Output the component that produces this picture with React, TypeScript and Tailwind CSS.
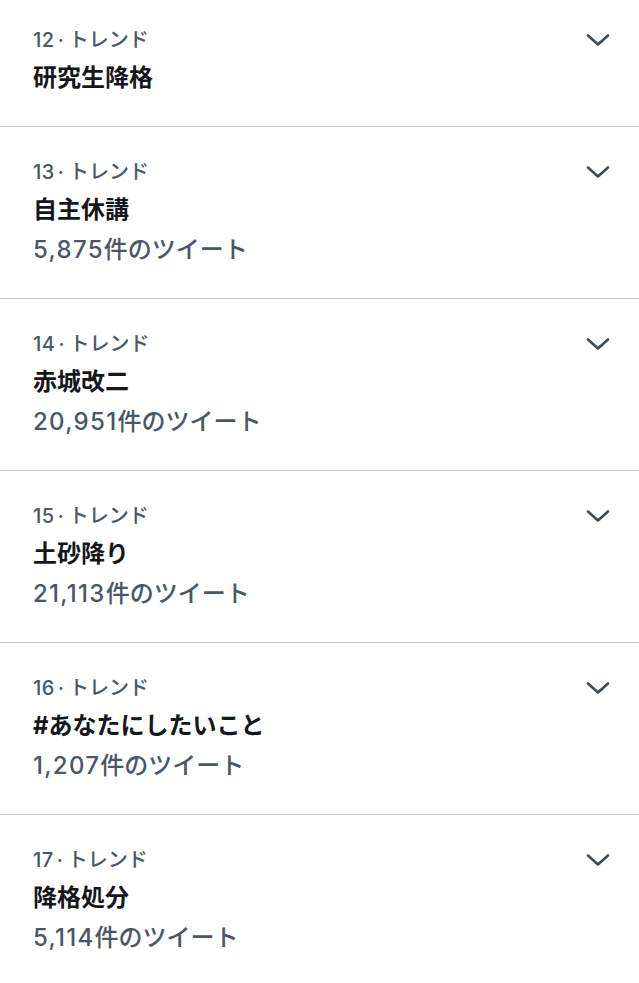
interface Trend {
  rank: number;
  title: string;
  count?: string;
}

const trends: Trend[] = [
  { rank: 12, title: '研究生降格' },
  { rank: 13, title: '自主休講', count: '5,875' },
  { rank: 14, title: '赤城改二', count: '20,951' },
  { rank: 15, title: '土砂降り', count: '21,113' },
  { rank: 16, title: '#あなたにしたいこと', count: '1,207' },
  { rank: 17, title: '降格処分', count: '5,114' },
];

const Chevron = () => (
  <svg aria-hidden="true" width="24" height="16" viewBox="0 0 24 16" fill="none" className="text-[#3d4a58]">
    <path d="M2 3.5 12 12.5 22 3.5" stroke="currentColor" strokeWidth="2.6" strokeLinecap="round" strokeLinejoin="round" />
  </svg>
);

const TrendRow = ({ trend, first }: { trend: Trend; first: boolean }) => (
  <div
    className={`flex items-start justify-between border-b border-[#c8c8c8] pl-[33px] pr-[29px] pb-[28px] ${
      first ? 'pt-[22px]' : 'pt-[27px]'
    }`}
  >
    <div className="flex flex-col">
      <div className="flex h-[36px] items-center text-[20px] font-medium text-[#4a5766]">
        <span className="tracking-[0.5px]">{trend.rank}</span>
        <span className="ml-[3px] mr-[5px]">·</span>トレンド
      </div>
      <div className="flex h-[40px] items-center text-[24px] font-bold text-[#14171a]">{trend.title}</div>
      {trend.count && (
        <div className="flex h-[40px] items-center text-[24px] font-medium text-[#4a5766]">
          <span className="tracking-[1.3px]">{trend.count}</span>件のツイート
        </div>
      )}
    </div>
    <div className="flex h-[36px] items-center">
      <Chevron />
    </div>
  </div>
);

export default function App() {
  return (
    <div
      className="min-h-screen w-full bg-white"
      style={{ fontFamily: 'Inter, "Noto Sans CJK JP", sans-serif' }}
    >
      {trends.map((trend, i) => (
        <TrendRow key={trend.rank} trend={trend} first={i === 0} />
      ))}
    </div>
  );
}
